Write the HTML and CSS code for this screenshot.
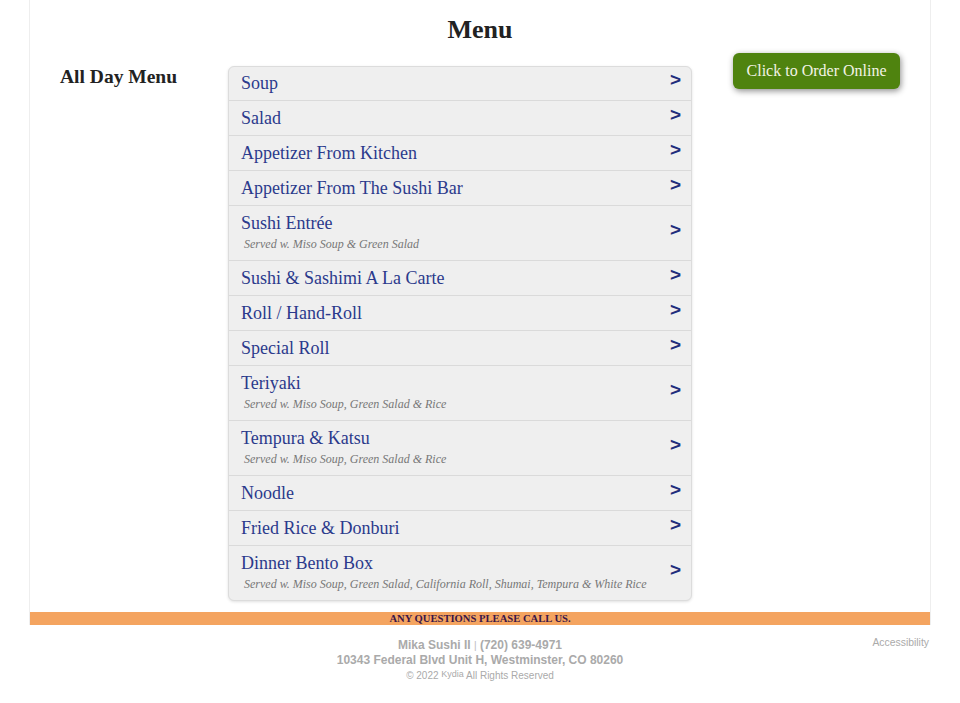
FILE: index.html
```html
<!DOCTYPE html>
<html>
<head>
<meta charset="utf-8">
<link rel="stylesheet" href="styles.css">
</head>
<body>
<div class="page">
  <h1 class="title">Menu</h1>
  <div class="content">
    <div class="side">
      <h2 class="side-title">All Day Menu</h2>
    </div>
    <div class="menu-list">
      <a class="row"><div class="row-text"><div class="row-title">Soup</div></div><span class="arrow">&gt;</span></a>
      <a class="row"><div class="row-text"><div class="row-title">Salad</div></div><span class="arrow">&gt;</span></a>
      <a class="row"><div class="row-text"><div class="row-title">Appetizer From Kitchen</div></div><span class="arrow">&gt;</span></a>
      <a class="row"><div class="row-text"><div class="row-title">Appetizer From The Sushi Bar</div></div><span class="arrow">&gt;</span></a>
      <a class="row"><div class="row-text"><div class="row-title">Sushi Entrée</div><div class="row-sub">Served w. Miso Soup &amp; Green Salad</div></div><span class="arrow">&gt;</span></a>
      <a class="row"><div class="row-text"><div class="row-title">Sushi &amp; Sashimi A La Carte</div></div><span class="arrow">&gt;</span></a>
      <a class="row"><div class="row-text"><div class="row-title">Roll / Hand-Roll</div></div><span class="arrow">&gt;</span></a>
      <a class="row"><div class="row-text"><div class="row-title">Special Roll</div></div><span class="arrow">&gt;</span></a>
      <a class="row"><div class="row-text"><div class="row-title">Teriyaki</div><div class="row-sub">Served w. Miso Soup, Green Salad &amp; Rice</div></div><span class="arrow">&gt;</span></a>
      <a class="row"><div class="row-text"><div class="row-title">Tempura &amp; Katsu</div><div class="row-sub">Served w. Miso Soup, Green Salad &amp; Rice</div></div><span class="arrow">&gt;</span></a>
      <a class="row"><div class="row-text"><div class="row-title">Noodle</div></div><span class="arrow">&gt;</span></a>
      <a class="row"><div class="row-text"><div class="row-title">Fried Rice &amp; Donburi</div></div><span class="arrow">&gt;</span></a>
      <a class="row"><div class="row-text"><div class="row-title">Dinner Bento Box</div><div class="row-sub">Served w. Miso Soup, Green Salad, California Roll, Shumai, Tempura &amp; White Rice</div></div><span class="arrow">&gt;</span></a>
    </div>
    <div class="order">
      <a class="order-btn">Click to Order Online</a>
    </div>
  </div>
  <div class="band">ANY QUESTIONS PLEASE CALL US.</div>
</div>
<footer class="footer">
  <div></div>
  <div class="info">
    <div class="info-line"><span>Mika Sushi II</span> <span class="sep">|</span> <span>(720) 639-4971</span></div>
    <div class="info-line">10343 Federal Blvd Unit H, Westminster, CO 80260</div>
    <div class="copy">© 2022 <span class="kydia">Kydia</span> All Rights Reserved</div>
  </div>
  <div class="access">Accessibility</div>
</footer>
</body>
</html>
```

FILE: styles.css
```css
html, body {
  margin: 0;
  padding: 0;
  background: #fff;
}
body {
  font-family: "Liberation Serif", "Times New Roman", serif;
  color: #222;
}
.page {
  width: 900px;
  margin: 0 auto;
  border-left: 1px solid #eee;
  border-right: 1px solid #eee;
}
.title {
  margin: 0;
  padding-top: 15px;
  font-size: 26px;
  line-height: 30px;
  font-weight: bold;
  text-align: center;
  color: #222;
}
.content {
  display: flex;
  align-items: flex-start;
  padding-top: 8px;
}
.side {
  width: 168px;
  padding-left: 30px;
  padding-top: 12px;
}
.side-title {
  margin: 0;
  font-size: 19.5px;
  line-height: 24px;
  font-weight: bold;
  color: #222;
}
.menu-list {
  width: 462px;
  margin-top: 13px;
  background: #efefef;
  border: 1px solid #dcdcdc;
  border-radius: 6px;
  box-shadow: 0 1px 3px rgba(0,0,0,0.12);
  overflow: hidden;
}
.row {
  display: flex;
  align-items: center;
  padding: 6px 10px 6px 12px;
  border-bottom: 1px solid #dadada;
  cursor: pointer;
}
.row:first-child {
  padding-top: 5px;
}
.row:last-child {
  border-bottom: none;
}
.row-text {
  flex: 1;
}
.row-title {
  font-size: 18px;
  line-height: 22px;
  color: #2b3a8c;
}
.row-sub {
  font-size: 12px;
  line-height: 20px;
  font-style: italic;
  color: #777;
  padding-left: 3px;
}
.arrow {
  font-family: "Liberation Sans", Arial, sans-serif;
  font-weight: bold;
  font-size: 19px;
  line-height: 18px;
  color: #1f2d7c;
  margin-top: -6px;
}
.order {
  flex: 1;
  display: flex;
  justify-content: flex-end;
  padding-right: 30px;
}
.order-btn {
  display: block;
  background: #4f830f;
  color: #f3f3e6;
  font-size: 16px;
  line-height: 20px;
  padding: 8px 13.5px;
  border-radius: 6px;
  box-shadow: 1px 2px 6px rgba(0,0,0,0.45);
  cursor: pointer;
}
.band {
  margin-top: 11px;
  background: #f4a460;
  height: 13px;
  font-size: 10.6px;
  line-height: 13px;
  font-weight: bold;
  text-align: center;
  color: #3a1648;
}
.footer {
  width: 902px;
  margin: 0 auto;
  display: grid;
  grid-template-columns: 1fr auto 1fr;
  padding-top: 13px;
  font-family: "Liberation Sans", Arial, sans-serif;
  color: #aaa;
}
.info {
  text-align: center;
}
.info-line {
  font-size: 12px;
  line-height: 14px;
  font-weight: bold;
}
.sep {
  font-weight: normal;
  font-size: 10px;
  color: #bbb;
}
.copy {
  margin-top: 0;
  font-size: 10px;
  line-height: 14px;
}
.kydia {
  font-size: 9px;
  vertical-align: 2px;
}
.access {
  justify-self: end;
  font-size: 10.4px;
  line-height: 12px;
  padding-right: 2px;
  margin-top: -1px;
}
```
